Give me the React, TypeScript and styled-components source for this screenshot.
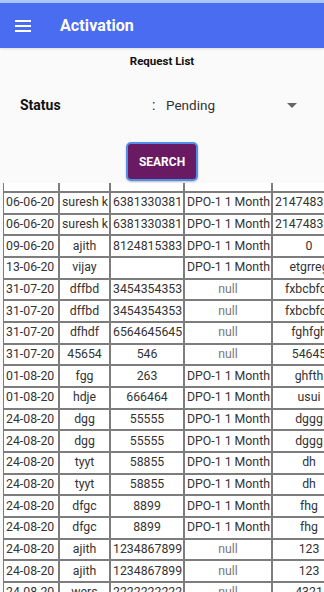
import styled, { createGlobalStyle } from "styled-components";

const GlobalStyle = createGlobalStyle`
  html, body {
    margin: 0;
    padding: 0;
    background: #fafafa;
    font-family: Roboto, "Liberation Sans", sans-serif;
  }
  #root {
    width: 324px;
    height: 592px;
    overflow: hidden;
  }
`;

type Row = [string, string, string, string, string];

const rows: Row[] = [
  ["06-06-20", "suresh k", "6381330381", "DPO-1 1 Month", "2147483647"],
  ["06-06-20", "suresh k", "6381330381", "DPO-1 1 Month", "2147483647"],
  ["09-06-20", "ajith", "8124815383", "DPO-1 1 Month", "0"],
  ["13-06-20", "vijay", "", "DPO-1 1 Month", "etgrreg"],
  ["31-07-20", "dffbd", "3454354353", "null", "fxbcbfcb"],
  ["31-07-20", "dffbd", "3454354353", "null", "fxbcbfcb"],
  ["31-07-20", "dfhdf", "6564645645", "null", "fghfgh"],
  ["31-07-20", "45654", "546", "null", "54645"],
  ["01-08-20", "fgg", "263", "DPO-1 1 Month", "ghfth"],
  ["01-08-20", "hdje", "666464", "DPO-1 1 Month", "usui"],
  ["24-08-20", "dgg", "55555", "DPO-1 1 Month", "dggg"],
  ["24-08-20", "dgg", "55555", "DPO-1 1 Month", "dggg"],
  ["24-08-20", "tyyt", "58855", "DPO-1 1 Month", "dh"],
  ["24-08-20", "tyyt", "58855", "DPO-1 1 Month", "dh"],
  ["24-08-20", "dfgc", "8899", "DPO-1 1 Month", "fhg"],
  ["24-08-20", "dfgc", "8899", "DPO-1 1 Month", "fhg"],
  ["24-08-20", "ajith", "1234867899", "null", "123"],
  ["24-08-20", "ajith", "1234867899", "null", "123"],
  ["24-08-20", "wers", "2222222222", "null", "4321"],
];

const widths = [56, 51, 74, 88, 91];

const StatusStrip = styled.div`
  height: 3px;
  background: #a9c6f6;
`;

const AppBar = styled.header`
  height: 45px;
  display: flex;
  align-items: center;
  padding-left: 15px;
  background: #4a6cf0;
  box-shadow: 0 1px 2px rgba(0, 0, 0, 0.12);
`;

const Hamburger = styled.svg`
  width: 16px;
  height: 12px;
  display: block;
`;

const Title = styled.h1`
  margin: 0 0 0 29px;
  font-size: 16px;
  font-weight: 700;
  color: #ffffff;
  letter-spacing: 0.1px;
`;

const SubTitle = styled.div`
  margin-top: 5px;
  height: 16px;
  line-height: 16px;
  text-align: center;
  font-size: 11.5px;
  font-weight: 700;
  color: #111;
`;

const StatusRow = styled.div`
  margin-top: 16px;
  height: 40px;
  display: grid;
  grid-template-columns: 132px 14px 1fr 10px;
  align-items: center;
  padding: 0 27px 0 20px;
`;

const Label = styled.span`
  font-size: 14px;
  font-weight: 700;
  color: #111;
`;

const Colon = styled.span`
  font-size: 14px;
  color: #222;
`;

const Value = styled.span`
  font-size: 13.5px;
  color: #333;
`;

const Caret = styled.span`
  width: 0;
  height: 0;
  border-left: 5px solid transparent;
  border-right: 5px solid transparent;
  border-top: 5px solid #666;
`;

const ButtonRow = styled.div`
  margin-top: 17px;
  display: flex;
  justify-content: center;
`;

const SearchButton = styled.button`
  width: 72px;
  height: 39px;
  border-radius: 5px;
  border: 2px solid #4f8fe8;
  background: #6a1a62;
  color: #fff;
  font-family: Roboto, "Liberation Sans", sans-serif;
  font-size: 12px;
  font-weight: 700;
  padding: 0;
  box-shadow: 0 1px 2px rgba(0, 0, 0, 0.25);
`;

const TableWrap = styled.div`
  margin-top: 2px;
  padding-left: 3px;
  overflow: hidden;
`;

const Table = styled.table`
  table-layout: fixed;
  width: 360px;
  border-collapse: separate;
  border-spacing: 0;
  background: #fff;
`;

const Col = styled.col<{ $w: number }>`
  width: ${(p) => p.$w}px;
`;

const Cell = styled.td<{ $align?: string; $muted?: boolean; $spacer?: boolean }>`
  box-sizing: border-box;
  height: ${(p) => (p.$spacer ? "9px" : "21.68px")};
  padding: 0 2px;
  border: 1px solid #7d7d7d;
  border-top: ${(p) => (p.$spacer ? "none" : "1px solid #7d7d7d")};
  font-size: 12.3px;
  line-height: 19px;
  color: ${(p) => (p.$muted ? "#777" : "#333")};
  text-align: ${(p) => p.$align || "center"};
  white-space: nowrap;
  overflow: hidden;
`;

// last column is wider than the screen; short values centre in the visible part
const LastText = styled.span<{ $long: boolean }>`
  display: block;
  width: 68px;
  text-align: ${(p) => (p.$long ? "left" : "center")};
`;

export default function App() {
  return (
    <>
      <GlobalStyle />
      <StatusStrip />
      <AppBar>
        <Hamburger viewBox="0 0 16 12">
          <rect x="0" y="0" width="16" height="2" fill="#fff" />
          <rect x="0" y="5" width="16" height="2" fill="#fff" />
          <rect x="0" y="10" width="16" height="2" fill="#fff" />
        </Hamburger>
        <Title>Activation</Title>
      </AppBar>
      <SubTitle>Request List</SubTitle>
      <StatusRow>
        <Label>Status</Label>
        <Colon>:</Colon>
        <Value>Pending</Value>
        <Caret />
      </StatusRow>
      <ButtonRow>
        <SearchButton>SEARCH</SearchButton>
      </ButtonRow>
      <TableWrap>
        <Table>
          <colgroup>
            {widths.map((w, i) => (
              <Col key={i} $w={w} />
            ))}
          </colgroup>
          <tbody>
            <tr>
              {widths.map((_, i) => (
                <Cell key={i} $spacer />
              ))}
            </tr>
            {rows.map((r, i) => (
              <tr key={i}>
                <Cell $align="left">{r[0]}</Cell>
                <Cell>{r[1]}</Cell>
                <Cell>{r[2]}</Cell>
                <Cell $muted={r[3] === "null"}>{r[3]}</Cell>
                <Cell $align="left">
                  <LastText $long={r[4].length > 9}>{r[4]}</LastText>
                </Cell>
              </tr>
            ))}
          </tbody>
        </Table>
      </TableWrap>
    </>
  );
}
